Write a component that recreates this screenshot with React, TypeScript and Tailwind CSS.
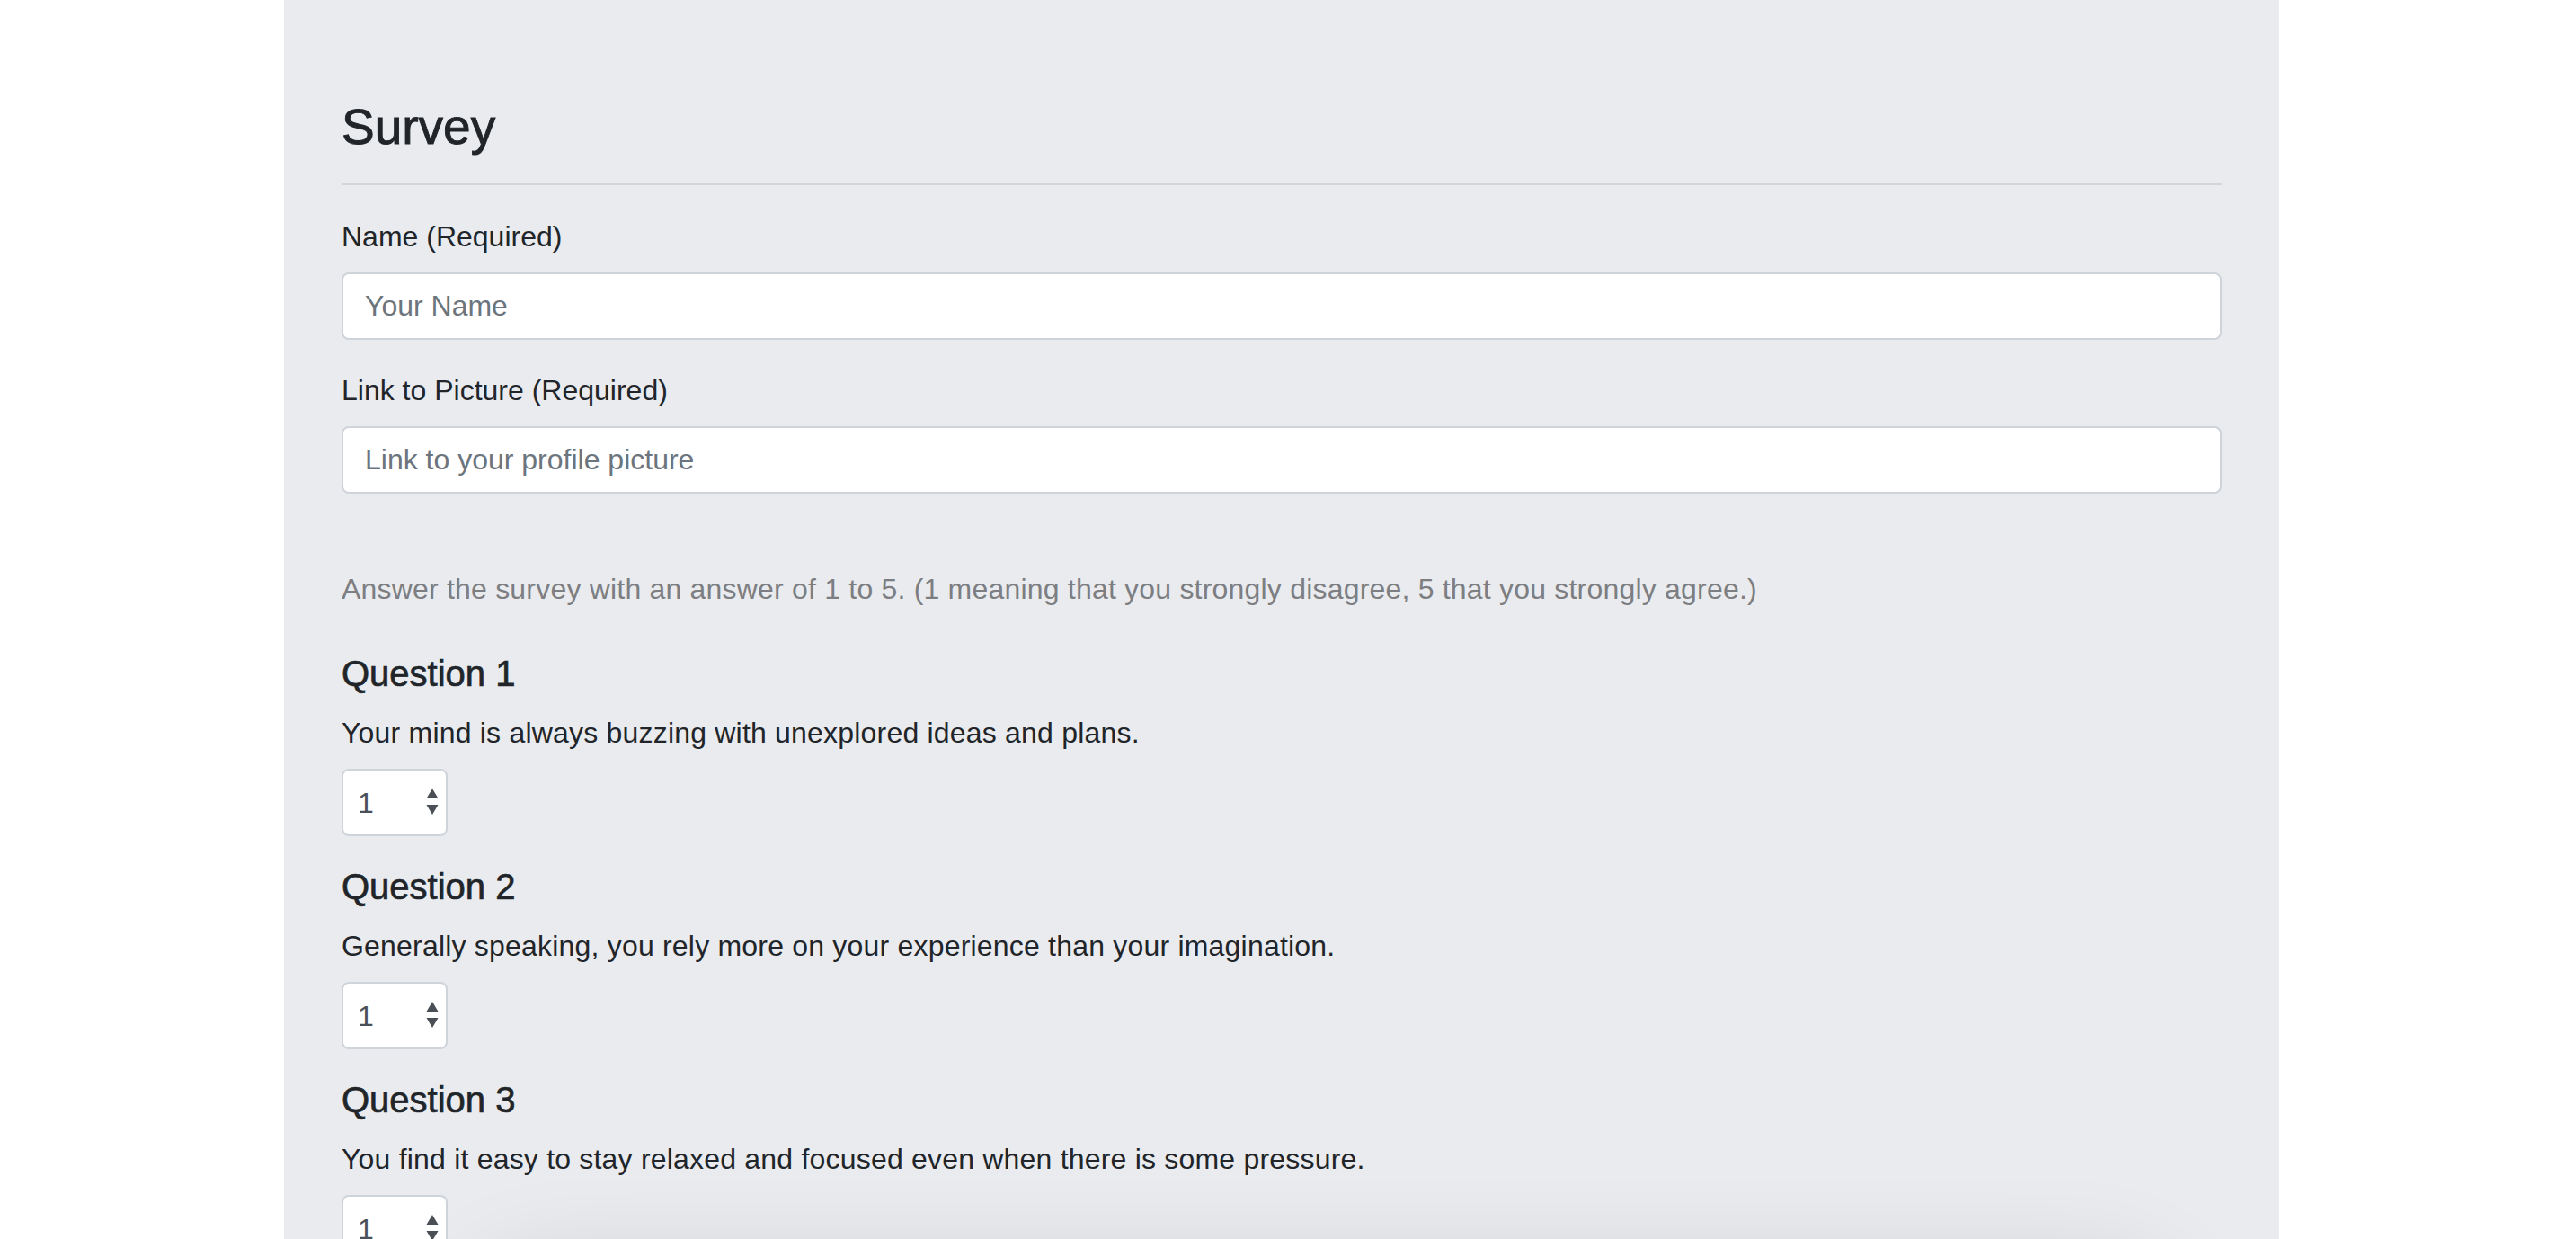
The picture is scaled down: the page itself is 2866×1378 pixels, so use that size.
import React, { useState } from 'react';

// Survey questions (1 = strongly disagree, 5 = strongly agree)
const QUESTIONS = [
  'Your mind is always buzzing with unexplored ideas and plans.',
  'Generally speaking, you rely more on your experience than your imagination.',
  'You find it easy to stay relaxed and focused even when there is some pressure.',
  'You rarely do something just out of sheer curiosity.',
  'People can rarely upset you.',
  "It is often difficult for you to relate to other people's feelings.",
  "In a discussion, truth should be more important than people's sensitivities.",
  'You rarely get carried away by fantasies and ideas.',
  "You think that everyone's views should be respected regardless of whether they are supported by facts or not.",
  'You feel more energetic after spending time with a group of people.',
];

const OPTIONS = ['1', '2', '3', '4', '5'];

function ScoreSelect({ value, onChange }: { value: string; onChange: (v: string) => void }) {
  return (
    <div className="relative inline-block">
      <select
        value={value}
        onChange={(e) => onChange(e.target.value)}
        className="appearance-none w-[118px] h-[75px] bg-white border-2 border-[#ced4da] rounded-[8px] pl-[16px] text-[32px] text-[#495057] outline-none"
      >
        {OPTIONS.map((o) => (
          <option key={o} value={o}>{o}</option>
        ))}
      </select>
      {/* native up/down arrows */}
      <svg className="absolute right-[10px] top-[22px] pointer-events-none" width="14" height="30" viewBox="0 0 14 30">
        <path d="M7 0 L13.5 11 L0.5 11 Z" fill="#4a4f55" />
        <path d="M0.5 18 L13.5 18 L7 29 Z" fill="#4a4f55" />
      </svg>
    </div>
  );
}

export default function App() {
  const [answers, setAnswers] = useState<string[]>(QUESTIONS.map(() => '1'));
  const [name, setName] = useState('');
  const [photo, setPhoto] = useState('');

  const setAnswer = (idx: number, v: string) => {
    setAnswers((prev) => prev.map((a, i) => (i === idx ? v : a)));
  };

  return (
    <div className="min-h-screen bg-white font-['Liberation_Sans',Arial,sans-serif] text-[#212529]">
      <div className="relative isolate ml-[316px] w-[2220px] bg-[#e9ebef] px-[64px] pt-[108px] pb-[128px]">
        {/* soft shadow of the card sitting below the fold */}
        <div className="absolute left-[230px] top-[1440px] w-[1850px] h-[300px] rounded-[60px] -z-10 shadow-[0_0_110px_30px_rgba(0,0,0,0.13)]" />

        <h2 className="text-[55px] leading-[66px] font-medium [-webkit-text-stroke:0.9px_#212529]">Survey</h2>
        <hr className="mt-[30px] mb-[33px] border-0 border-t-2 border-[#d3d5d9]" />

        {/* Name */}
        <div className="mb-[32px]">
          <label className="block text-[32px] leading-[48px] mb-[16px]">Name (Required)</label>
          <input
            type="text"
            value={name}
            onChange={(e) => setName(e.target.value)}
            placeholder="Your Name"
            className="block w-full h-[75px] bg-white border-2 border-[#ced4da] rounded-[8px] px-[24px] text-[32px] placeholder:text-[#6c757d] outline-none"
          />
        </div>

        {/* Picture */}
        <div>
          <label className="block text-[32px] leading-[48px] mb-[16px]">Link to Picture (Required)</label>
          <input
            type="text"
            value={photo}
            onChange={(e) => setPhoto(e.target.value)}
            placeholder="Link to your profile picture"
            className="block w-full h-[75px] bg-white border-2 border-[#ced4da] rounded-[8px] px-[24px] text-[32px] placeholder:text-[#6c757d] outline-none"
          />
        </div>

        <p className="mt-[82px] text-[32px] leading-[48px] tracking-[0.2px] text-[#7d7e81]">
          Answer the survey with an answer of 1 to 5. (1 meaning that you strongly disagree, 5 that you strongly agree.)
        </p>

        <div className="mt-[46px]">
          {QUESTIONS.map((q, idx) => (
            <div key={idx} className="mb-[32px]">
              <h5 className="text-[40px] leading-[48px] font-medium [-webkit-text-stroke:0.7px_#212529] mb-[18px]">
                Question {idx + 1}
              </h5>
              <p className="text-[32px] leading-[48px] tracking-[0.2px] mb-[16px]">{q}</p>
              <ScoreSelect value={answers[idx]} onChange={(v) => setAnswer(idx, v)} />
            </div>
          ))}
        </div>
      </div>
    </div>
  );
}
